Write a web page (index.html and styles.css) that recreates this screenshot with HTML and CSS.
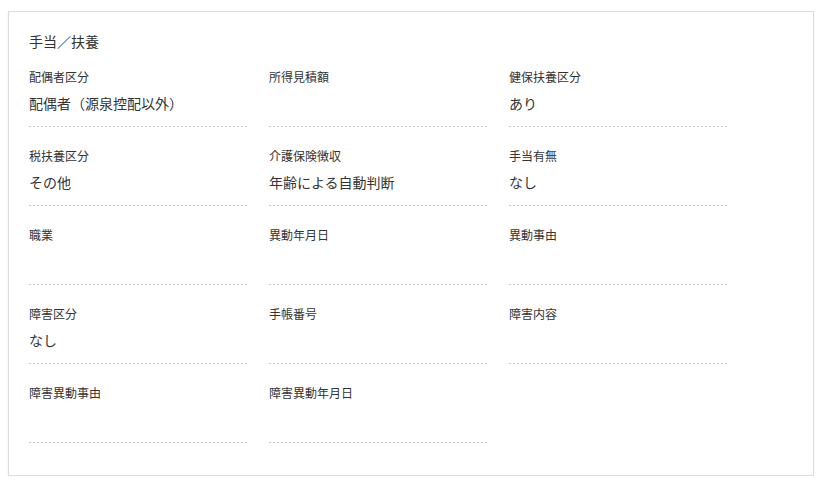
FILE: index.html
```html
<!DOCTYPE html>
<html lang="ja">
<head>
<meta charset="utf-8">
<link rel="stylesheet" href="styles.css">
</head>
<body>
<section class="card">
  <h2 class="card-title">手当／扶養</h2>
  <div class="grid">
    <div class="field"><div class="label">配偶者区分</div><div class="value">配偶者（源泉控配以外）</div></div>
    <div class="field"><div class="label">所得見積額</div><div class="value"></div></div>
    <div class="field"><div class="label">健保扶養区分</div><div class="value">あり</div></div>

    <div class="field"><div class="label">税扶養区分</div><div class="value">その他</div></div>
    <div class="field"><div class="label">介護保険徴収</div><div class="value">年齢による自動判断</div></div>
    <div class="field"><div class="label">手当有無</div><div class="value">なし</div></div>

    <div class="field"><div class="label">職業</div><div class="value"></div></div>
    <div class="field"><div class="label">異動年月日</div><div class="value"></div></div>
    <div class="field"><div class="label">異動事由</div><div class="value"></div></div>

    <div class="field"><div class="label">障害区分</div><div class="value">なし</div></div>
    <div class="field"><div class="label">手帳番号</div><div class="value"></div></div>
    <div class="field"><div class="label">障害内容</div><div class="value"></div></div>

    <div class="field"><div class="label">障害異動事由</div><div class="value"></div></div>
    <div class="field"><div class="label">障害異動年月日</div><div class="value"></div></div>
  </div>
</section>
</body>
</html>
```

FILE: styles.css
```css
html, body {
  margin: 0;
  padding: 0;
  background: #fff;
}
body {
  padding: 11px 0 0 8px;
  font-family: "Noto Sans CJK JP", "Noto Sans", sans-serif;
  color: #333;
}
.card {
  box-sizing: border-box;
  width: 806px;
  height: 465px;
  border: 1px solid #dcdcdc;
  box-shadow: 0 1px 2px rgba(0, 0, 0, 0.08);
  padding: 19px 20px 0 20px;
  background: #fff;
}
.card-title {
  margin: 0 0 17px 0;
  font-size: 14px;
  font-weight: normal;
  line-height: 20px;
  color: #333;
}
.grid {
  display: grid;
  grid-template-columns: 218px 218px 218px;
  column-gap: 22px;
  row-gap: 20px;
}
.field {
  padding-bottom: 13px;
  background-image: linear-gradient(to right, #c8c8c8 0 2px, transparent 2px 4px);
  background-size: 4px 1px;
  background-repeat: repeat-x;
  background-position: left bottom;
}
.label {
  font-size: 12px;
  line-height: 18px;
  margin-bottom: 6px;
  color: #333;
}
.value {
  font-size: 14px;
  line-height: 22px;
  min-height: 22px;
  color: #333;
}
```
